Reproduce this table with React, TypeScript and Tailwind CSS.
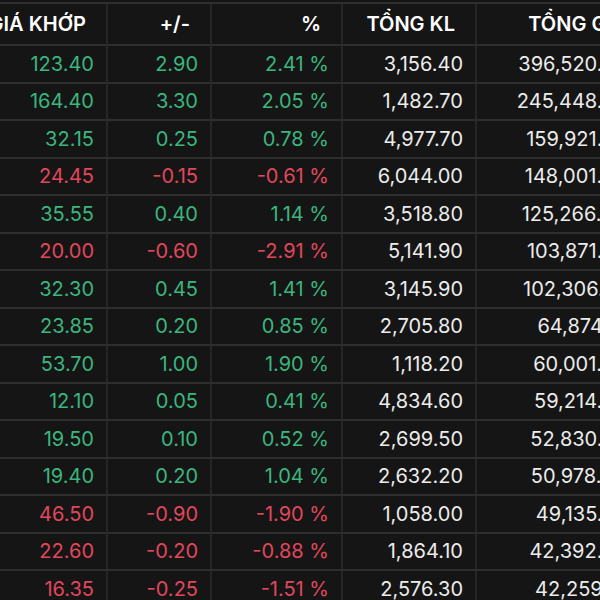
type Row = {
  price: string;
  change: string;
  pct: string;
  vol: string;
  value: string;
};

const rows: Row[] = [
  { price: "123.40", change: "2.90", pct: "2.41 %", vol: "3,156.40", value: "396,520.60" },
  { price: "164.40", change: "3.30", pct: "2.05 %", vol: "1,482.70", value: "245,448.30" },
  { price: "32.15", change: "0.25", pct: "0.78 %", vol: "4,977.70", value: "159,921.80" },
  { price: "24.45", change: "-0.15", pct: "-0.61 %", vol: "6,044.00", value: "148,001.20" },
  { price: "35.55", change: "0.40", pct: "1.14 %", vol: "3,518.80", value: "125,266.40" },
  { price: "20.00", change: "-0.60", pct: "-2.91 %", vol: "5,141.90", value: "103,871.50" },
  { price: "32.30", change: "0.45", pct: "1.41 %", vol: "3,145.90", value: "102,306.70" },
  { price: "23.85", change: "0.20", pct: "0.85 %", vol: "2,705.80", value: "64,874.10" },
  { price: "53.70", change: "1.00", pct: "1.90 %", vol: "1,118.20", value: "60,001.90" },
  { price: "12.10", change: "0.05", pct: "0.41 %", vol: "4,834.60", value: "59,214.20" },
  { price: "19.50", change: "0.10", pct: "0.52 %", vol: "2,699.50", value: "52,830.60" },
  { price: "19.40", change: "0.20", pct: "1.04 %", vol: "2,632.20", value: "50,978.40" },
  { price: "46.50", change: "-0.90", pct: "-1.90 %", vol: "1,058.00", value: "49,135.30" },
  { price: "22.60", change: "-0.20", pct: "-0.88 %", vol: "1,864.10", value: "42,392.80" },
  { price: "16.35", change: "-0.25", pct: "-1.51 %", vol: "2,576.30", value: "42,259.10" },
];

const cols = ["w-[128px]", "w-[104px]", "w-[131px]", "w-[134px]", "w-[164px]"];

function HeaderCell({ label, col }: { label: string; col: number }) {
  return (
    <div
      className={`${cols[col]} shrink-0 flex items-center justify-end whitespace-nowrap border-r-2 border-[#262626] pr-5`}
    >
      {label}
    </div>
  );
}

function Cell({ children, col, tone }: { children: string; col: number; tone: string }) {
  return (
    <div
      className={`${cols[col]} shrink-0 flex items-center justify-end whitespace-nowrap border-r-2 border-[#262626] pr-3 ${tone}`}
    >
      {children}
    </div>
  );
}

export default function App() {
  return (
    <div
      className="h-[600px] w-[600px] overflow-hidden bg-[#151515] pt-[2px] text-[20px] text-[#ececec]"
      style={{ fontFamily: "Inter, 'Noto Sans', sans-serif" }}
    >
      <div className="-ml-[20px] w-[700px]">
        <div className="flex h-[44px] border-y-2 border-[#2e2e2e] font-semibold text-white">
          <HeaderCell label="GIÁ KHỚP" col={0} />
          <HeaderCell label="+/-" col={1} />
          <HeaderCell label="%" col={2} />
          <HeaderCell label="TỔNG KL" col={3} />
          <HeaderCell label="TỔNG GT" col={4} />
        </div>

        {rows.map((row) => {
          const tone = row.change.startsWith("-") ? "text-[#e0475c]" : "text-[#3bb67f]";
          return (
            <div key={row.price + row.vol} className="flex h-[37.5px] border-b-2 border-[#2e2e2e]">
              <Cell col={0} tone={tone}>{row.price}</Cell>
              <Cell col={1} tone={tone}>{row.change}</Cell>
              <Cell col={2} tone={tone}>{row.pct}</Cell>
              <Cell col={3} tone="text-[#ececec]">{row.vol}</Cell>
              <Cell col={4} tone="text-[#ececec]">{row.value}</Cell>
            </div>
          );
        })}
      </div>
    </div>
  );
}
